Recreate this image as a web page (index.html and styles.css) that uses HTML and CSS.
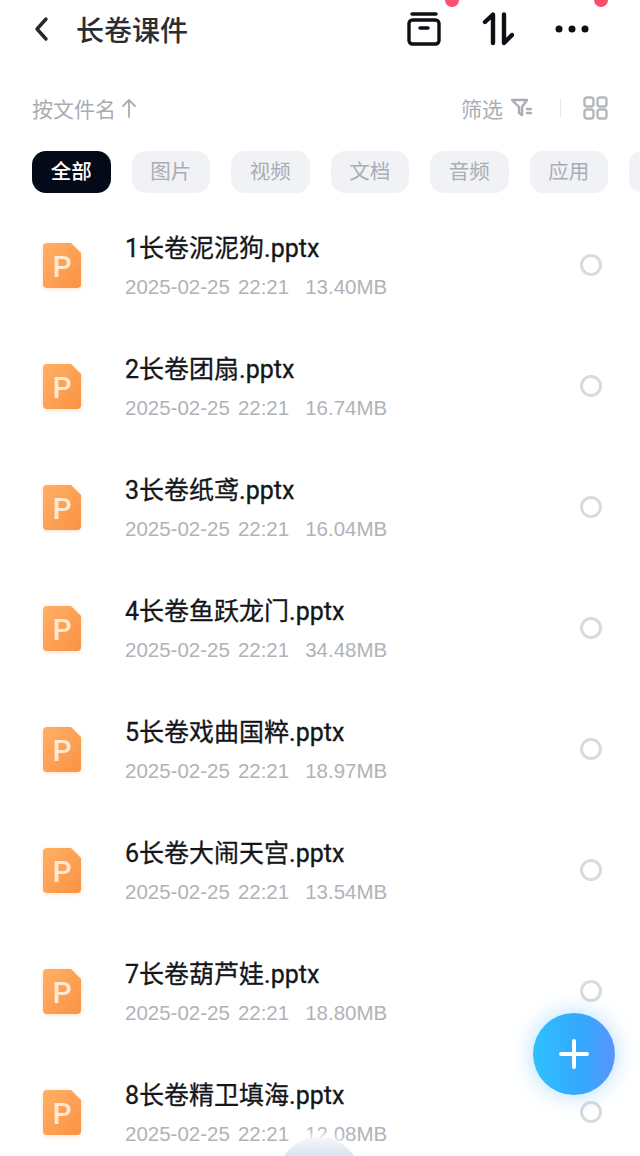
FILE: index.html
```html
<!DOCTYPE html>
<html lang="zh-CN">
<head>
  <meta charset="UTF-8" />
  <meta name="viewport" content="width=device-width, initial-scale=1.0" />
  <title>长卷课件</title>
  <link rel="stylesheet" href="styles.css">
</head>
<body>
  <svg class="defs" width="0" height="0">
    <defs>
      <linearGradient id="ppt-fill" x1="0" y1="0" x2="1" y2="1">
        <stop offset="0" stop-color="#ffb066"/>
        <stop offset="1" stop-color="#fa9243"/>
      </linearGradient>
      <symbol id="ppt-icon" viewBox="0 0 38 45">
        <path d="M4 0H28L38 10V41a4 4 0 0 1-4 4H4a4 4 0 0 1-4-4V4a4 4 0 0 1 4-4Z" fill="url(#ppt-fill)"/>
        <text class="ppt-letter" x="19" y="34" text-anchor="middle">P</text>
      </symbol>
    </defs>
  </svg>

  <div class="page">
    <header class="topbar">
      <svg class="back" width="16" height="26" viewBox="0 0 16 26"><path d="M13 3L4 13l9 10" fill="none" stroke="#26282c" stroke-width="3.4" stroke-linecap="round" stroke-linejoin="round"/></svg>
      <h1 class="title">长卷课件</h1>
      <div class="actions">
        <svg width="34" height="34" viewBox="0 0 34 34"><g fill="none" stroke="#0d0f14" stroke-width="3.4" stroke-linecap="round" stroke-linejoin="round"><path d="M5 2h24"/><rect x="2" y="8" width="30" height="24" rx="3.5"/><path d="M13 16h8"/></g></svg>
        <svg width="32" height="34" viewBox="0 0 32 34"><g fill="none" stroke="#0d0f14" stroke-width="4.4" stroke-linecap="round" stroke-linejoin="round"><path d="M3 10L11 2.500V31"/><path d="M22 2.500V31L30 23"/></g></svg>
        <svg width="34" height="10" viewBox="0 0 34 10"><g fill="#0d0f14"><circle cx="4" cy="5" r="3.500"/><circle cx="17" cy="5" r="3.500"/><circle cx="30" cy="5" r="3.500"/></g></svg>
      </div>
      <span class="badge badge-box"></span>
      <span class="badge badge-more"></span>
    </header>

    <div class="toolbar">
      <div class="sort">
        <span>按文件名</span>
        <svg width="16" height="20" viewBox="0 0 16 20"><path d="M8 19V2M2 8l6-6 6 6" fill="none" stroke="#a9adb3" stroke-width="1.800" stroke-linecap="round" stroke-linejoin="round"/></svg>
      </div>
      <div class="tools">
        <span>筛选</span>
        <svg class="funnel" width="22" height="20" viewBox="0 0 22 20"><g fill="none" stroke="#a9adb3" stroke-width="2.400" stroke-linecap="round" stroke-linejoin="round"><path d="M2 2h15l-5 7v8l-3-2V9Z"/><path d="M17 11h4M17 15h4"/></g></svg>
        <i class="divider"></i>
        <svg width="25" height="24" viewBox="0 0 25 24"><g fill="none" stroke="#b4b7bc" stroke-width="2.400"><rect x="1.500" y="1.500" width="9" height="9" rx="2.500"/><rect x="14.500" y="1.500" width="9" height="9" rx="2.500"/><rect x="1.500" y="13.500" width="9" height="9" rx="2.500"/><rect x="14.500" y="13.500" width="9" height="9" rx="2.500"/></g></svg>
      </div>
    </div>

    <nav class="chips">
      <span class="chip active">全部</span>
      <span class="chip">图片</span>
      <span class="chip">视频</span>
      <span class="chip">文档</span>
      <span class="chip">音频</span>
      <span class="chip">应用</span>
      <span class="chip"></span>
    </nav>

    <ul class="files">
      <li class="file">
        <svg class="file-icon"><use href="#ppt-icon"/></svg>
        <div class="file-text"><div class="name">1长卷泥泥狗.pptx</div><div class="meta"><span>2025-02-25</span><span>22:21</span><span>13.40MB</span></div></div>
        <i class="radio"></i>
      </li>
      <li class="file">
        <svg class="file-icon"><use href="#ppt-icon"/></svg>
        <div class="file-text"><div class="name">2长卷团扇.pptx</div><div class="meta"><span>2025-02-25</span><span>22:21</span><span>16.74MB</span></div></div>
        <i class="radio"></i>
      </li>
      <li class="file">
        <svg class="file-icon"><use href="#ppt-icon"/></svg>
        <div class="file-text"><div class="name">3长卷纸鸢.pptx</div><div class="meta"><span>2025-02-25</span><span>22:21</span><span>16.04MB</span></div></div>
        <i class="radio"></i>
      </li>
      <li class="file">
        <svg class="file-icon"><use href="#ppt-icon"/></svg>
        <div class="file-text"><div class="name">4长卷鱼跃龙门.pptx</div><div class="meta"><span>2025-02-25</span><span>22:21</span><span>34.48MB</span></div></div>
        <i class="radio"></i>
      </li>
      <li class="file">
        <svg class="file-icon"><use href="#ppt-icon"/></svg>
        <div class="file-text"><div class="name">5长卷戏曲国粹.pptx</div><div class="meta"><span>2025-02-25</span><span>22:21</span><span>18.97MB</span></div></div>
        <i class="radio"></i>
      </li>
      <li class="file">
        <svg class="file-icon"><use href="#ppt-icon"/></svg>
        <div class="file-text"><div class="name">6长卷大闹天宫.pptx</div><div class="meta"><span>2025-02-25</span><span>22:21</span><span>13.54MB</span></div></div>
        <i class="radio"></i>
      </li>
      <li class="file">
        <svg class="file-icon"><use href="#ppt-icon"/></svg>
        <div class="file-text"><div class="name">7长卷葫芦娃.pptx</div><div class="meta"><span>2025-02-25</span><span>22:21</span><span>18.80MB</span></div></div>
        <i class="radio"></i>
      </li>
      <li class="file">
        <svg class="file-icon"><use href="#ppt-icon"/></svg>
        <div class="file-text"><div class="name">8长卷精卫填海.pptx</div><div class="meta"><span>2025-02-25</span><span>22:21</span><span>12.08MB</span></div></div>
        <i class="radio"></i>
      </li>
    </ul>

    <button class="fab" type="button">
      <svg width="30" height="30" viewBox="0 0 30 30"><path d="M15 2v26M2 15h26" stroke="#fff" stroke-width="4" stroke-linecap="round"/></svg>
    </button>
    <div class="bubble"></div>
  </div>
</body>
</html>
```

FILE: styles.css
```css
* {
  box-sizing: border-box;
}
body {
  margin: 0;
  background: #fff;
  font-family: Roboto, "Noto Sans CJK SC", sans-serif;
}
.defs {
  position: absolute;
}
.ppt-letter {
  font-family: Roboto, sans-serif;
  font-size: 30px;
  font-weight: 500;
  fill: #ffe9d4;
}
.page {
  position: relative;
  width: 640px;
  height: 1156px;
  overflow: hidden;
}

/* top bar */
.topbar {
  display: flex;
  align-items: center;
  height: 58px;
  padding: 0 51px 0 33px;
}
.title {
  margin: 0 0 0 27px;
  font-size: 28px;
  font-weight: 500;
  color: #2b2d31;
}
.actions {
  display: flex;
  align-items: center;
  gap: 41px;
  margin-left: auto;
}
.badge {
  position: absolute;
  top: -7px;
  width: 14px;
  height: 14px;
  border-radius: 50%;
  background: #fb4f6e;
}
.badge-box {
  left: 445px;
}
.badge-more {
  left: 594px;
}

/* sort and filter row */
.toolbar {
  display: flex;
  align-items: center;
  justify-content: space-between;
  height: 26px;
  margin-top: 37px;
  padding: 0 32px;
  font-size: 21px;
  color: #a9adb3;
}
.sort,
.tools {
  display: flex;
  align-items: center;
}
.sort svg {
  margin-left: 5px;
}
.funnel {
  margin-left: 7px;
}
.divider {
  width: 1px;
  height: 20px;
  margin: 0 22px 0 28px;
  background: #e6e7ea;
}

/* category chips */
.chips {
  display: flex;
  gap: 21px;
  margin-top: 30px;
  padding-left: 32px;
}
.chip {
  flex: none;
  width: 78.500px;
  height: 42px;
  border-radius: 14px;
  background: #f0f2f5;
  color: #a9adb5;
  font-size: 20.500px;
  line-height: 42px;
  text-align: center;
}
.chip.active {
  background: #050a18;
  color: #fff;
  font-weight: 500;
}

/* file list */
.files {
  margin: 12px 0 0;
  padding: 0;
  list-style: none;
}
.file {
  display: flex;
  align-items: center;
  height: 121px;
  padding: 0 38px 0 43px;
}
.file-icon {
  flex: none;
  width: 38px;
  height: 45px;
  filter: drop-shadow(0 1px 2px rgba(251, 150, 72, .3));
}
.file-text {
  flex: 1;
  margin-left: 44px;
  padding-top: 3px;
}
.name {
  font-size: 25px;
  line-height: 32px;
  color: #14161a;
  -webkit-text-stroke: .3px #14161a;
}
.meta {
  display: flex;
  gap: 8px;
  margin-top: 8px;
  font-family: "Liberation Sans", sans-serif;
  font-size: 20.500px;
  line-height: 28px;
  color: #b0b3b8;
}
.meta span:last-child {
  margin-left: 8px;
}
.radio {
  flex: none;
  width: 22px;
  height: 22px;
  margin-bottom: 2px;
  border: 3.500px solid #dadada;
  border-radius: 50%;
}

/* floating buttons */
.fab {
  position: absolute;
  left: 533px;
  top: 1013px;
  display: flex;
  align-items: center;
  justify-content: center;
  width: 82px;
  height: 82px;
  padding: 0;
  border: 0;
  border-radius: 50%;
  background: linear-gradient(90deg, #30c0fd 0%, #33a8fd 60%, #5b94fb 100%);
  box-shadow: 0 0 22px rgba(60, 170, 255, .4);
}
.bubble {
  position: absolute;
  left: 277px;
  top: 1137px;
  width: 84px;
  height: 84px;
  border-radius: 50%;
  background: linear-gradient(180deg, #f6f8fb 0%, #dde5ee 20%, #cfdae8 100%);
  box-shadow: 0 -3px 10px rgba(255, 255, 255, .95);
}
```
